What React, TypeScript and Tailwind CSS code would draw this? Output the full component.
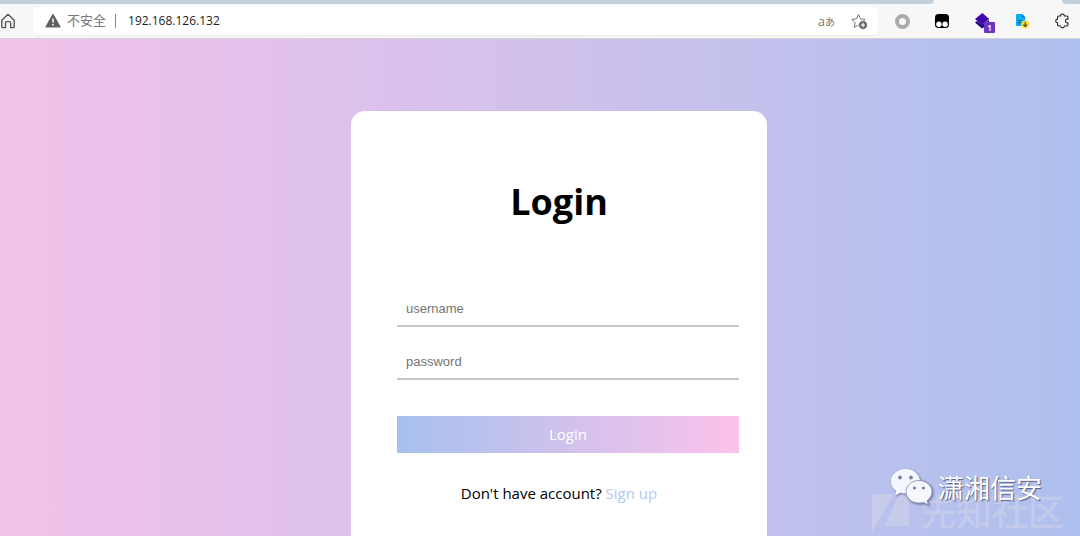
import React, { useState } from 'react';

const HomeIcon = () => (
  <svg viewBox="0 0 16 16" className="size-4 shrink-0" fill="none" stroke="#555" strokeWidth="1.4" strokeLinejoin="round">
    <path d="M1.8 7.2 8 1.3l6.2 5.900v6.500c0 .6-.3.900-.9.900h-2.600V10.200c0-1-.6-1.600-1.500-1.600H7c-.9 0-1.500.6-1.500 1.600v4.400H2.700c-.6 0-.9-.3-.9-.9Z" />
  </svg>
);

const WarningIcon = () => (
  <svg viewBox="0 0 16 16" className="size-4 shrink-0">
    <path d="M8 1.6 15 13.800H1Z" fill="#5f5f5f" stroke="#5f5f5f" strokeWidth="1.2" strokeLinejoin="round" />
    <path d="M8 5.6v4" stroke="#fff" strokeWidth="1.5" />
    <circle cx="8" cy="11.6" r=".9" fill="#fff" />
  </svg>
);

const StarIcon = () => (
  <svg viewBox="0 0 17 17" className="size-[17px]" fill="none">
    <path d="m7.500 1.600 2 4.300 4.600.5-3.400 3.200.9 4.700-4.100-2.200-4.200 2.300.8-4.800L.9 6.400l4.600-.5Z" stroke="#777" strokeLinejoin="round" />
    <circle cx="12" cy="12" r="4.4" fill="#666" stroke="#fff" strokeWidth=".6" />
    <path d="M12 9.8v4.400M9.800 12h4.400" stroke="#fff" strokeWidth="1.1" />
  </svg>
);

const MonkeyIcon = () => (
  <svg viewBox="0 0 16 16" className="size-4">
    <rect x="1" y="1" width="14" height="14" rx="3.5" fill="#000" />
    <circle cx="4.9" cy="11.2" r="2.7" fill="#fff" />
    <circle cx="11.1" cy="11.2" r="2.7" fill="#fff" />
  </svg>
);

const LayersIcon = () => (
  <svg viewBox="0 0 22 22" className="size-[22px]">
    <path d="M1 9.500 3 8l5 3.400L15 7v4l-7 4.600Z" fill="#280580" />
    <path d="m8.400 0 6.800 6L8 11.800 1 5.900Z" fill="#4206b0" />
    <rect x="10" y="9" width="11" height="11" rx="1" fill="#6b35bf" />
    <text x="15.5" y="18" textAnchor="middle" fontSize="9" fontWeight="600" fill="#fff" fontFamily="Open Sans, sans-serif">1</text>
  </svg>
);

const FileIcon = () => (
  <svg viewBox="0 0 16 16" className="size-4">
    <path d="M3.200 1H8l3.200 3.200V13H3.200C2.400 13 2 12.600 2 12V2c0-.6.4-1 1.200-1Z" fill="#0aaef0" />
    <path d="M8 1v3.200h3.200Z" fill="#0878b4" />
    <path d="M4 7.400h4M4 9.600h3" stroke="#075d8c" />
    <circle cx="11.2" cy="11.3" r="3.9" fill="#fbdc32" />
    <path d="M11.200 9v4.400M9.400 11.700l1.800 1.800 1.800-1.800" fill="none" stroke="#464632" strokeWidth="1.1" />
  </svg>
);

const PuzzleIcon = () => (
  <svg viewBox="0 0 16 16" className="size-4" fill="none" stroke="#333" strokeWidth="1.2" strokeLinejoin="round">
    <path d="M4.600 3h2a1.900 1.900 0 0 1 3.800 0h2.500c.6 0 1 .4 1 1v2.200h-.7a1.800 1.800 0 0 0 0 3.600h.7V12c0 .6-.4 1-1 1h-2.500a1.900 1.900 0 0 1-3.800 0h-2c-.6 0-1-.4-1-1V9.900a1.900 1.900 0 0 1 0-3.800V4c0-.6.4-1 1-1Z" />
  </svg>
);

const ChatIcon = () => (
  <svg viewBox="0 0 44 38" className="h-[38px] w-11 shrink-0 drop-shadow-[1px_1px_1px_#66708f]">
    <path d="M15.500 1C7.500 1 1 6.600 1 13.700c0 4 2 7.200 5.300 9.500L5 27.500l5.300-2.700c1.700.5 3.500.7 5.200.7C23.500 25.500 30 20.500 30 13.500S23.500 1 15.500 1Z" fill="#f5f7ff" />
    <circle cx="10" cy="9.5" r="1.9" fill="#7883a8" />
    <circle cx="21" cy="9.5" r="1.9" fill="#7883a8" />
    <path d="M29 12.500c-7.200 0-13 5-13 11.300s5.800 11.300 13 11.300c1.500 0 3-.2 4.500-.7l5 2.600-1.400-4.300c3-2.200 4.900-5.200 4.900-8.900 0-6.300-5.800-11.300-13-11.300Z" fill="#f5f7ff" stroke="#8089aa" strokeWidth=".8" />
    <circle cx="24.500" cy="20" r="1.6" fill="#7883a8" />
    <circle cx="33.500" cy="20" r="1.6" fill="#7883a8" />
  </svg>
);

const BrowserBar = () => (
  <header className="bg-[#f7f7f7] border-b border-[#d3d3d3]">
    <div className="flex h-1 justify-between">
      <div className="grow rounded-br bg-[#c3d0da]" />
      <div className="w-32" />
      <div className="w-[18px] rounded-bl bg-[#c3d0da]" />
    </div>
    <div className="flex items-center h-[34px] pr-2.5">
      <button type="button" aria-label="Home" className="w-[33px] shrink-0">
        <HomeIcon />
      </button>
      <div className="flex flex-1 items-center h-7 rounded bg-white pl-3 pr-2.5 shadow-xs">
        <WarningIcon />
        <span className="ml-1.5 text-[13px] text-[#777] font-['Open_Sans','Noto_Sans_CJK_SC',sans-serif]">不安全</span>
        <span className="ml-[9px] h-3.5 w-px bg-[#888]" />
        <input
          type="text"
          aria-label="Address"
          defaultValue="192.168.126.132"
          className="ml-3 min-w-0 flex-1 text-xs text-[#222] outline-none"
        />
        <button type="button" aria-label="Translate" className="mr-4 text-[13px] leading-4 text-[#777] font-['Open_Sans','Noto_Sans_CJK_JP',sans-serif]">
          a<span className="text-[10px]">あ</span>
        </button>
        <button type="button" aria-label="Add to favorites">
          <StarIcon />
        </button>
      </div>
      <div className="flex items-center ml-4 gap-6">
        <button type="button" aria-label="Extension" className="flex size-4 items-center justify-center">
          <span className="size-[15px] shrink-0 rounded-full border-4 border-[#aaa]" />
        </button>
        <button type="button" aria-label="Scripts"><MonkeyIcon /></button>
        <button type="button" aria-label="Layers" className="-mr-1.5 pt-1.5"><LayersIcon /></button>
        <button type="button" aria-label="Downloads"><FileIcon /></button>
        <button type="button" aria-label="Extensions"><PuzzleIcon /></button>
      </div>
    </div>
  </header>
);

const Watermark = () => (
  <div className="absolute right-4 bottom-1 h-16 w-[192px] pointer-events-none">
    <div className="absolute left-0 bottom-0 flex items-end text-[#dcdce6]/40">
      <svg viewBox="0 0 38 38" className="size-[38px] shrink-0" fill="currentColor">
        <path d="M0 0h22L0 38ZM27 0h10v32H13Z" />
      </svg>
      <span className="ml-2.5 pb-1 text-4xl leading-9 font-medium whitespace-nowrap font-['Noto_Sans_CJK_SC',sans-serif]">先知社区</span>
    </div>
    <div className="absolute left-[18px] top-0 flex items-center gap-1">
      <ChatIcon />
      <span className="text-[26px] leading-9 text-white whitespace-nowrap font-['Noto_Sans_CJK_SC',sans-serif] [text-shadow:1px_1px_1px_#555f80]">潇湘信安</span>
    </div>
  </div>
);

const App: React.FC = () => {
  const [username, setUsername] = useState('');
  const [password, setPassword] = useState('');

  const fieldClass =
    "block w-full h-9 border-b-2 border-[#c8c8c8] px-[9px] text-[13px] font-['Liberation_Sans',sans-serif] placeholder:text-[#757575] outline-none";

  return (
    <div className="relative flex flex-col min-h-screen overflow-hidden font-['Open_Sans','Noto_Sans_CJK_SC',sans-serif]">
      <BrowserBar />
      <main className="flex flex-1 justify-center pl-[38px] pt-[72px] bg-[linear-gradient(90deg,#f3c2ea,#aec0ee)]">
        <form
          onSubmit={(e) => e.preventDefault()}
          className="flex w-full max-w-[416px] flex-col rounded-t-[14px] bg-white pt-[63px] pl-[46px] pr-7 pb-6"
        >
          <h1 className="mr-[18px] mb-[61px] text-center text-4xl leading-[56px] font-bold text-black">Login</h1>
          <input
            type="text"
            aria-label="Username"
            placeholder="username"
            value={username}
            onChange={(e) => setUsername(e.target.value)}
            className={`${fieldClass} mb-[17px]`}
          />
          <input
            type="password"
            aria-label="Password"
            placeholder="password"
            value={password}
            onChange={(e) => setPassword(e.target.value)}
            className={`${fieldClass} mb-9`}
          />
          <button type="submit" className="h-[37px] w-full bg-[linear-gradient(90deg,#a6c1ee,#fbc2eb)] text-[15px] text-white">
            Login
          </button>
          <p className="mt-[30px] mr-[18px] text-center text-[15px] leading-5 text-black">
            Don't have account? <a href="#signup" className="text-[#b2c6f1]">Sign up</a>
          </p>
        </form>
      </main>
      <Watermark />
    </div>
  );
};

export default App;
